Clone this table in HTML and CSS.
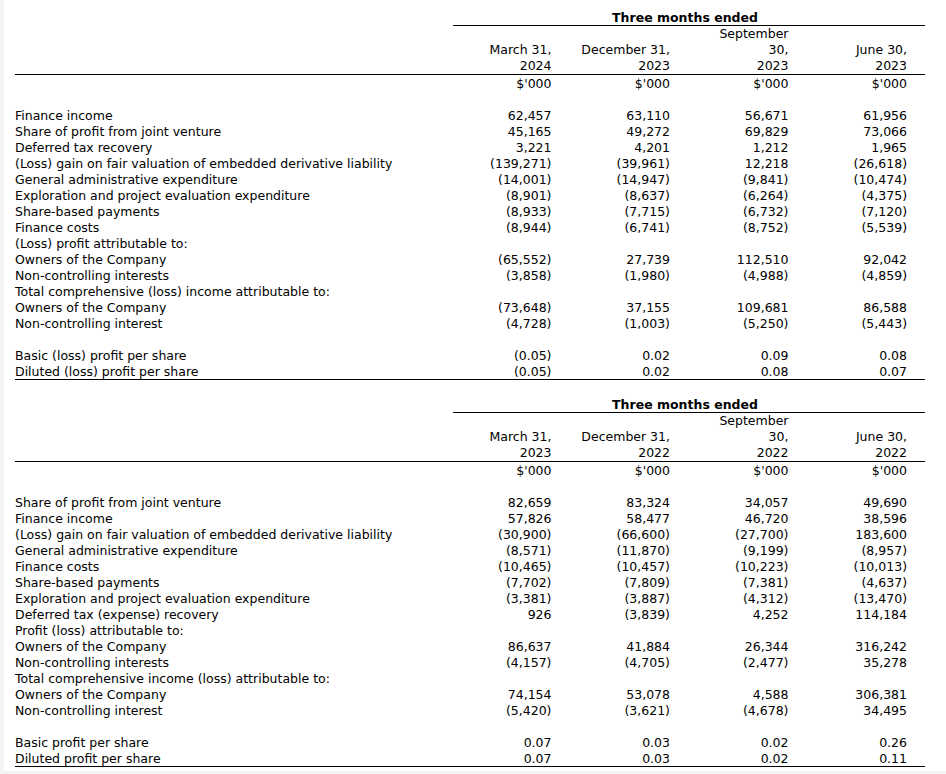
FILE: index.html
```html
<!DOCTYPE html>
<html>
<head>
<meta charset="utf-8">
<link rel="stylesheet" href="styles.css">
</head>
<body>
<div class="panel">
<table class="fin">
  <colgroup><col class="c-label"><col class="c-num"><col class="c-num"><col class="c-num"><col class="c-num"></colgroup>
  <tr><td></td><td colspan="4" class="period"><div class="period-text">Three months ended</div></td></tr>
  <tr class="dates"><td></td><td>March 31,<br>2024</td><td>December 31,<br>2023</td><td>September<br>30,<br>2023</td><td>June 30,<br>2023</td></tr>
  <tr class="units"><td></td><td>$'000</td><td>$'000</td><td>$'000</td><td>$'000</td></tr>
  <tr class="blank"><td colspan="5"></td></tr>
  <tr><td>Finance income</td><td>62,457</td><td>63,110</td><td>56,671</td><td>61,956</td></tr>
  <tr><td>Share of profit from joint venture</td><td>45,165</td><td>49,272</td><td>69,829</td><td>73,066</td></tr>
  <tr><td>Deferred tax recovery</td><td>3,221</td><td>4,201</td><td>1,212</td><td>1,965</td></tr>
  <tr><td>(Loss) gain on fair valuation of embedded derivative liability</td><td>(139,271)</td><td>(39,961)</td><td>12,218</td><td>(26,618)</td></tr>
  <tr><td>General administrative expenditure</td><td>(14,001)</td><td>(14,947)</td><td>(9,841)</td><td>(10,474)</td></tr>
  <tr><td>Exploration and project evaluation expenditure</td><td>(8,901)</td><td>(8,637)</td><td>(6,264)</td><td>(4,375)</td></tr>
  <tr><td>Share-based payments</td><td>(8,933)</td><td>(7,715)</td><td>(6,732)</td><td>(7,120)</td></tr>
  <tr><td>Finance costs</td><td>(8,944)</td><td>(6,741)</td><td>(8,752)</td><td>(5,539)</td></tr>
  <tr><td colspan="5">(Loss) profit attributable to:</td></tr>
  <tr><td>Owners of the Company</td><td>(65,552)</td><td>27,739</td><td>112,510</td><td>92,042</td></tr>
  <tr><td>Non-controlling interests</td><td>(3,858)</td><td>(1,980)</td><td>(4,988)</td><td>(4,859)</td></tr>
  <tr><td colspan="5">Total comprehensive (loss) income attributable to:</td></tr>
  <tr><td>Owners of the Company</td><td>(73,648)</td><td>37,155</td><td>109,681</td><td>86,588</td></tr>
  <tr><td>Non-controlling interest</td><td>(4,728)</td><td>(1,003)</td><td>(5,250)</td><td>(5,443)</td></tr>
  <tr class="blank"><td colspan="5"></td></tr>
  <tr><td>Basic (loss) profit per share</td><td>(0.05)</td><td>0.02</td><td>0.09</td><td>0.08</td></tr>
  <tr class="last"><td>Diluted (loss) profit per share</td><td>(0.05)</td><td>0.02</td><td>0.08</td><td>0.07</td></tr>
</table>

<table class="fin">
  <colgroup><col class="c-label"><col class="c-num"><col class="c-num"><col class="c-num"><col class="c-num"></colgroup>
  <tr><td></td><td colspan="4" class="period"><div class="period-text">Three months ended</div></td></tr>
  <tr class="dates"><td></td><td>March 31,<br>2023</td><td>December 31,<br>2022</td><td>September<br>30,<br>2022</td><td>June 30,<br>2022</td></tr>
  <tr class="units"><td></td><td>$'000</td><td>$'000</td><td>$'000</td><td>$'000</td></tr>
  <tr class="blank"><td colspan="5"></td></tr>
  <tr><td>Share of profit from joint venture</td><td>82,659</td><td>83,324</td><td>34,057</td><td>49,690</td></tr>
  <tr><td>Finance income</td><td>57,826</td><td>58,477</td><td>46,720</td><td>38,596</td></tr>
  <tr><td>(Loss) gain on fair valuation of embedded derivative liability</td><td>(30,900)</td><td>(66,600)</td><td>(27,700)</td><td>183,600</td></tr>
  <tr><td>General administrative expenditure</td><td>(8,571)</td><td>(11,870)</td><td>(9,199)</td><td>(8,957)</td></tr>
  <tr><td>Finance costs</td><td>(10,465)</td><td>(10,457)</td><td>(10,223)</td><td>(10,013)</td></tr>
  <tr><td>Share-based payments</td><td>(7,702)</td><td>(7,809)</td><td>(7,381)</td><td>(4,637)</td></tr>
  <tr><td>Exploration and project evaluation expenditure</td><td>(3,381)</td><td>(3,887)</td><td>(4,312)</td><td>(13,470)</td></tr>
  <tr><td>Deferred tax (expense) recovery</td><td>926</td><td>(3,839)</td><td>4,252</td><td>114,184</td></tr>
  <tr><td colspan="5">Profit (loss) attributable to:</td></tr>
  <tr><td>Owners of the Company</td><td>86,637</td><td>41,884</td><td>26,344</td><td>316,242</td></tr>
  <tr><td>Non-controlling interests</td><td>(4,157)</td><td>(4,705)</td><td>(2,477)</td><td>35,278</td></tr>
  <tr><td colspan="5">Total comprehensive income (loss) attributable to:</td></tr>
  <tr><td>Owners of the Company</td><td>74,154</td><td>53,078</td><td>4,588</td><td>306,381</td></tr>
  <tr><td>Non-controlling interest</td><td>(5,420)</td><td>(3,621)</td><td>(4,678)</td><td>34,495</td></tr>
  <tr class="blank"><td colspan="5"></td></tr>
  <tr><td>Basic profit per share</td><td>0.07</td><td>0.03</td><td>0.02</td><td>0.26</td></tr>
  <tr class="last"><td>Diluted profit per share</td><td>0.07</td><td>0.03</td><td>0.02</td><td>0.11</td></tr>
</table>
</div>
</body>
</html>
```
FILE: styles.css
```css
html, body {
  margin: 0;
  padding: 0;
  background: #f3f3f3;
}
.panel {
  margin-left: 4px;
  background: #ffffff;
  padding: 9px 0 4px 11px;
  font-family: "DejaVu Sans", Verdana, sans-serif;
  font-size: 12.5px;
  line-height: 14px;
  color: #000;
}
.fin {
  width: 910px;
  border-collapse: collapse;
  table-layout: fixed;
  margin-bottom: 16px;
}
.fin:last-child {
  margin-bottom: 0;
}
.c-label { width: 436px; }
.c-num { width: 118.5px; }
.fin td {
  padding: 2px 0 0 0;
  height: 14px;
  white-space: nowrap;
  vertical-align: bottom;
}
.fin td + td {
  text-align: right;
  padding-right: 18px;
}
.fin td[colspan="5"] {
  text-align: left;
  padding-right: 0;
}
.fin td.period {
  text-align: center;
  padding: 0;
  height: 16px;
}
.period-text {
  margin-left: 2px;
  padding: 2px 8px 0 0;
  font-weight: bold;
  border-bottom: 1px solid #000;
}
.dates td {
  padding-top: 0;
  line-height: 16px;
  height: 16px;
  border-bottom: 1px solid #000;
}
.last td {
  border-bottom: 1px solid #000;
}
```
